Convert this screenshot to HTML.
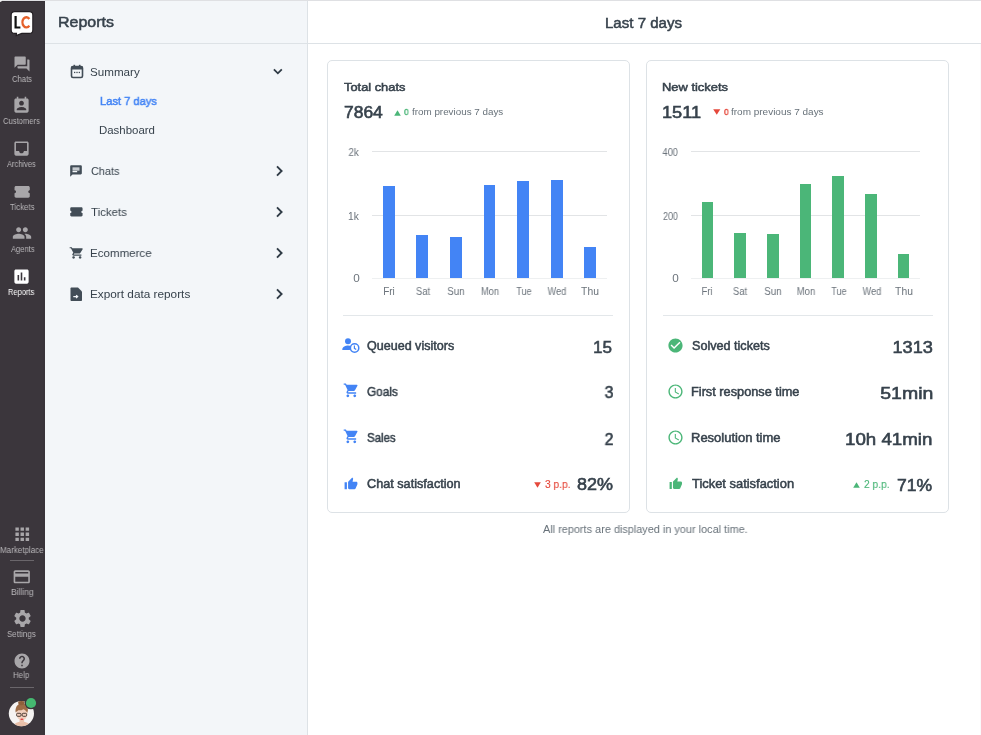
<!DOCTYPE html>
<html><head><meta charset="utf-8"><style>
html,body{margin:0;padding:0}
body{width:981px;height:735px;overflow:hidden;position:relative;background:#fff;font-family:"Liberation Sans",sans-serif}
.t{position:absolute;white-space:nowrap;line-height:1;will-change:transform}
.abs{position:absolute}
</style></head><body>
<div class="abs" style="left:0;top:0;width:981px;height:1px;background:#dfe0e3"></div>
<div class="abs" style="left:0;top:1px;width:45px;height:734px;background:#3b363c"></div>
<div class="abs" style="left:45px;top:1px;width:262px;height:734px;background:#f3f6f9"></div>
<div class="abs" style="left:307px;top:1px;width:1px;height:734px;background:#dde2e6"></div>
<div class="abs" style="left:45px;top:43px;width:936px;height:1px;background:#dde2e6"></div>
<div class="abs" style="left:980px;top:44px;width:1px;height:691px;background:#fafafb"></div>
<div class="abs" style="left:327px;top:60px;width:301px;height:451px;border:1px solid #dde2e6;border-radius:5px"></div>
<div class="abs" style="left:646px;top:60px;width:301px;height:451px;border:1px solid #dde2e6;border-radius:5px"></div>
<div class="abs" style="left:343px;top:315px;width:270px;height:1px;background:#e3e7ea"></div>
<div class="abs" style="left:663px;top:315px;width:270px;height:1px;background:#e3e7ea"></div>
<div class="abs" style="left:10px;top:560px;width:24px;height:1px;background:#6a666b"></div>
<div class="abs" style="left:10px;top:687px;width:24px;height:1px;background:#6a666b"></div>
<div class="abs" style="left:0;top:1px;width:45px;height:1px;background:#353036"></div>
<div class="abs" style="left:0;top:0;width:2px;height:2px;background:#f2f2f3;border-bottom-right-radius:2px"></div>
<div class="abs" style="left:43px;top:1px;width:2px;height:734px;background:#39343a"></div>
<svg style="position:absolute;left:0;top:0" width="45" height="40" viewBox="0 0 45 40"><path d="M14.6 11.6h14.8c1.9 0 3.4 1.5 3.4 3.4v15c0 1.9-1.5 3.4-3.4 3.4h-7.6l-5.6 2.2.3-2.2h-1.9c-1.900 0-3.4-1.500-3.4-3.4v-15c0-1.900 1.500-3.4 3.4-3.4z" fill="#fff" stroke="#231f23" stroke-width="1.1"/><path d="M15.6 16v11.5h4.8" stroke="#111" stroke-width="2.2" fill="none"/><path d="M29.3 19.0A3.85 5.1 0 1 0 29.3 25.6" stroke="#e5612b" stroke-width="2.4" fill="none"/></svg>
<svg style="position:absolute;left:13.0px;top:54.5px" width="18" height="18" viewBox="0 0 24 24" fill="#a8a6a9"><path d="M21 6h-2v9H6v2c0 .55.45 1 1 1h11l4 4V7c0-.55-.45-1-1-1zm-4 6V3c0-.55-.45-1-1-1H3c-.55 0-1 .45-1 1v14l4-4h10c.55 0 1-.45 1-1z"/></svg><svg style="position:absolute;left:12.2px;top:95.8px" width="19" height="19" viewBox="0 0 24 24" fill="#a8a6a9"><path d="M19 3h-1V1h-2v2H8V1H6v2H5c-1.11 0-2 .9-2 2v14c0 1.1.89 2 2 2h14c1.1 0 2-.9 2-2V5c0-1.1-.9-2-2-2zm-7 3c1.65 0 3 1.35 3 3s-1.35 3-3 3-3-1.35-3-3 1.35-3 3-3zm6 12H6v-1c0-2 4-3.1 6-3.1s6 1.1 6 3.1v1z"/></svg><svg style="position:absolute;left:12.0px;top:139.0px" width="19" height="19" viewBox="0 0 24 24" fill="#a8a6a9"><path d="M19 3H4.99c-1.11 0-1.98.89-1.98 2L3 19c0 1.1.88 2 1.99 2H19c1.1 0 2-.9 2-2V5c0-1.11-.9-2-2-2zm0 12h-4c0 1.66-1.35 3-3 3s-3-1.34-3-3H4.99V5H19v10z"/></svg><svg style="position:absolute;left:12.5px;top:182.5px" width="18.3" height="17.6" viewBox="0 0 24 24" preserveAspectRatio="none" fill="#a8a6a9"><path d="M22 10V6c0-1.11-.9-2-2-2H4c-1.1 0-1.99.89-1.99 2v4c1.1 0 1.99.9 1.99 2s-.89 2-2 2v4c0 1.1.9 2 2 2h16c1.1 0 2-.9 2-2v-4c-1.1 0-2-.9-2-2s.9-2 2-2z"/></svg><svg style="position:absolute;left:12.0px;top:223.2px" width="20" height="20" viewBox="0 0 24 24" fill="#a8a6a9"><path d="M16 11c1.66 0 2.99-1.34 2.99-3S17.66 5 16 5c-1.66 0-3 1.34-3 3s1.34 3 3 3zm-8 0c1.66 0 2.99-1.34 2.99-3S9.66 5 8 5C6.34 5 5 6.34 5 8s1.34 3 3 3zm0 2c-2.33 0-7 1.170-7 3.5V19h14v-2.5c0-2.33-4.67-3.5-7-3.5zm8 0c-.29 0-.62.02-.97.05 1.16.84 1.970 1.970 1.970 3.45V19h6v-2.5c0-2.33-4.67-3.5-7-3.5z"/></svg><svg style="position:absolute;left:12.0px;top:266.5px" width="19" height="19" viewBox="0 0 24 24" fill="#ffffff"><path d="M19 3H5c-1.1 0-2 .9-2 2v14c0 1.1.9 2 2 2h14c1.1 0 2-.9 2-2V5c0-1.1-.9-2-2-2zM9 17H7v-7h2v7zm4 0h-2V7h2v10zm4 0h-2v-4h2v4z"/></svg><svg style="position:absolute;left:11.5px;top:524.4px" width="20.5" height="20.5" viewBox="0 0 24 24" fill="#a8a6a9"><path d="M4 8h4V4H4v4zm6 12h4v-4h-4v4zm-6 0h4v-4H4v4zm0-6h4v-4H4v4zm6 0h4v-4h-4v4zm6-10v4h4V4h-4zm-6 4h4V4h-4v4zm6 6h4v-4h-4v4zm0 6h4v-4h-4v4z"/></svg><svg style="position:absolute;left:12.3px;top:567.2px" width="19.5" height="19.5" viewBox="0 0 24 24" fill="#a8a6a9"><path d="M20 4H4c-1.11 0-1.99.89-1.99 2L2 18c0 1.11.89 2 2 2h16c1.11 0 2-.89 2-2V6c0-1.11-.89-2-2-2zm0 14H4v-6h16v6zm0-10H4V6h16v2z"/></svg><svg style="position:absolute;left:11.5px;top:607.5px" width="21" height="21" viewBox="0 0 24 24" fill="#a8a6a9"><path d="M19.14 12.94c.04-.3.06-.61.06-.94 0-.32-.02-.64-.07-.94l2.03-1.58c.18-.14.23-.41.12-.61l-1.92-3.32c-.12-.22-.37-.29-.59-.22l-2.39.96c-.5-.38-1.030-.7-1.620-.94l-.36-2.54c-.04-.24-.24-.41-.48-.41h-3.84c-.24 0-.43.17-.47.41l-.36 2.54c-.59.24-1.130.57-1.620.94l-2.39-.96c-.22-.08-.47 0-.59.22L2.740 8.87c-.12.21-.08.47.12.61l2.030 1.58c-.05.3-.09.63-.09.94s.02.64.07.94l-2.030 1.58c-.18.14-.23.41-.12.61l1.920 3.32c.12.22.37.29.59.22l2.390-.96c.5.38 1.030.7 1.620.94l.36 2.54c.05.24.24.41.48.41h3.84c.24 0 .44-.17.47-.41l.36-2.54c.59-.24 1.130-.56 1.620-.94l2.390.96c.22.08.47 0 .59-.22l1.920-3.32c.12-.22.07-.47-.12-.61l-2.010-1.58zM12 15.6c-1.98 0-3.6-1.62-3.6-3.6s1.62-3.6 3.6-3.6 3.6 1.62 3.6 3.6-1.62 3.6-3.6 3.6z"/></svg><svg style="position:absolute;left:12.8px;top:651.8px" width="18" height="18" viewBox="0 0 24 24" fill="#a8a6a9"><path d="M12 2C6.48 2 2 6.48 2 12s4.48 10 10 10 10-4.48 10-10S17.52 2 12 2zm1 17h-2v-2h2v2zm2.07-7.75l-.9.92C13.45 12.9 13 13.5 13 15h-2v-.5c0-1.1.45-2.1 1.17-2.83l1.24-1.26c.37-.36.59-.86.59-1.41 0-1.1-.9-2-2-2s-2 .9-2 2H8c0-2.21 1.79-4 4-4s4 1.79 4 4c0 .88-.36 1.68-.93 2.25z"/></svg><svg style="position:absolute;left:69.0px;top:163.6px" width="14" height="14" viewBox="0 0 24 24" preserveAspectRatio="none" fill="#424d57"><path d="M20 2H4c-1.1 0-1.99.9-1.99 2L2 22l4-4h14c1.1 0 2-.9 2-2V4c0-1.1-.9-2-2-2zM6 9h12v2H6V9zm8 5H6v-2h8v2zm4-6H6V6h12v2z"/></svg><svg style="position:absolute;left:69.4px;top:204.7px" width="14.8" height="13.8" viewBox="0 0 24 24" preserveAspectRatio="none" fill="#424d57"><path d="M22 10V6c0-1.11-.9-2-2-2H4c-1.1 0-1.99.89-1.99 2v4c1.1 0 1.99.9 1.99 2s-.89 2-2 2v4c0 1.1.9 2 2 2h16c1.1 0 2-.9 2-2v-4c-1.1 0-2-.9-2-2s.9-2 2-2z"/></svg><svg style="position:absolute;left:69.15px;top:246.05px" width="15.7" height="13.8" viewBox="0 0 24 24" preserveAspectRatio="none" fill="#424d57"><path d="M7 18c-1.1 0-1.99.9-1.99 2S5.9 22 7 22s2-.9 2-2-.9-2-2-2zM1 2v2h2l3.6 7.59-1.35 2.45c-.16.28-.25.61-.25.96 0 1.1.9 2 2 2h12v-2H7.42c-.14 0-.25-.11-.25-.25l.03-.12.9-1.63h7.45c.75 0 1.41-.41 1.75-1.03l3.58-6.49c.08-.14.12-.31.12-.48 0-.55-.45-1-1-1H5.21l-.94-2H1zm16 16c-1.1 0-1.99.9-1.99 2s.89 2 1.99 2 2-.9 2-2-.9-2-2-2z"/></svg><svg style="position:absolute;left:342.5px;top:382.2px" width="16.6" height="16.6" viewBox="0 0 24 24" fill="#4384f5"><path d="M7 18c-1.1 0-1.99.9-1.99 2S5.9 22 7 22s2-.9 2-2-.9-2-2-2zM1 2v2h2l3.6 7.59-1.35 2.45c-.16.28-.25.61-.25.96 0 1.1.9 2 2 2h12v-2H7.42c-.14 0-.25-.11-.25-.25l.03-.12.9-1.63h7.45c.75 0 1.41-.41 1.75-1.03l3.58-6.49c.08-.14.12-.31.12-.48 0-.55-.45-1-1-1H5.21l-.94-2H1zm16 16c-1.1 0-1.99.9-1.99 2s.89 2 1.99 2 2-.9 2-2-.9-2-2-2z"/></svg><svg style="position:absolute;left:342.5px;top:428.2px" width="16.6" height="16.6" viewBox="0 0 24 24" fill="#4384f5"><path d="M7 18c-1.1 0-1.99.9-1.99 2S5.9 22 7 22s2-.9 2-2-.9-2-2-2zM1 2v2h2l3.6 7.59-1.35 2.45c-.16.28-.25.61-.25.96 0 1.1.9 2 2 2h12v-2H7.42c-.14 0-.25-.11-.25-.25l.03-.12.9-1.63h7.45c.75 0 1.41-.41 1.75-1.03l3.58-6.49c.08-.14.12-.31.12-.48 0-.55-.45-1-1-1H5.21l-.94-2H1zm16 16c-1.1 0-1.99.9-1.99 2s.89 2 1.99 2 2-.9 2-2-.9-2-2-2z"/></svg><svg style="position:absolute;left:344.1px;top:477.2px" width="14" height="14" viewBox="0 0 24 24" fill="#4384f5"><path d="M1 21h4V9H1v12zm22-11c0-1.1-.9-2-2-2h-6.31l.95-4.57.03-.32c0-.41-.17-.79-.44-1.06L14.17 1 7.59 7.59C7.22 7.95 7 8.45 7 9v10c0 1.1.9 2 2 2h9c.83 0 1.54-.5 1.84-1.22l3.02-7.05c.09-.23.14-.47.14-.73v-1.91l-.01-.01L23 10z"/></svg><svg style="position:absolute;left:667.0px;top:337.0px" width="17" height="17" viewBox="0 0 24 24" fill="#4bb678"><path d="M12 2C6.48 2 2 6.48 2 12s4.48 10 10 10 10-4.48 10-10S17.52 2 12 2zm-2 15l-5-5 1.41-1.41L10 14.17l7.59-7.59L19 8l-9 9z"/></svg><svg style="position:absolute;left:667.0px;top:383.0px" width="17" height="17" viewBox="0 0 24 24" fill="#4bb678"><path d="M11.99 2C6.47 2 2 6.48 2 12s4.47 10 9.99 10C17.52 22 22 17.52 22 12S17.52 2 11.99 2zM12 20c-4.42 0-8-3.580-8-8s3.580-8 8-8 8 3.580 8 8-3.580 8-8 8zm.5-13H11v6l5.25 3.15.75-1.23-4.5-2.67z"/></svg><svg style="position:absolute;left:667.0px;top:429.0px" width="17" height="17" viewBox="0 0 24 24" fill="#4bb678"><path d="M11.99 2C6.47 2 2 6.48 2 12s4.47 10 9.99 10C17.52 22 22 17.52 22 12S17.52 2 11.99 2zM12 20c-4.42 0-8-3.580-8-8s3.580-8 8-8 8 3.580 8 8-3.580 8-8 8zm.5-13H11v6l5.25 3.15.75-1.23-4.5-2.67z"/></svg><svg style="position:absolute;left:668.6px;top:477.3px" width="13.6" height="13.6" viewBox="0 0 24 24" fill="#4bb678"><path d="M1 21h4V9H1v12zm22-11c0-1.1-.9-2-2-2h-6.31l.95-4.57.03-.32c0-.41-.17-.79-.44-1.06L14.17 1 7.59 7.59C7.22 7.95 7 8.45 7 9v10c0 1.1.9 2 2 2h9c.83 0 1.54-.5 1.84-1.22l3.02-7.05c.09-.23.14-.47.14-.73v-1.91l-.01-.01L23 10z"/></svg>
<svg style="position:absolute;left:70px;top:64px" width="14" height="15" viewBox="0 0 14 15"><rect x="1.5" y="2.5" width="11" height="11" rx="1.5" fill="none" stroke="#424d57" stroke-width="1.6"/><rect x="1.5" y="2.5" width="11" height="3" fill="#424d57"/><rect x="3.5" y="0.8" width="1.6" height="3" fill="#424d57"/><rect x="8.9" y="0.8" width="1.6" height="3" fill="#424d57"/><rect x="4" y="7.8" width="1.3" height="1.3" fill="#424d57"/><rect x="6.35" y="7.8" width="1.3" height="1.3" fill="#424d57"/><rect x="8.7" y="7.8" width="1.3" height="1.3" fill="#424d57"/></svg><svg style="position:absolute;left:70px;top:287px" width="13" height="14" viewBox="0 0 13 14"><path d="M1.5 0.5h6.5l4 4v8.5c0 .55-.45 1-1 1h-9.5c-.55 0-1-.45-1-1v-11.5c0-.55.45-1 1-1z" fill="#424d57"/><path d="M3.3 9.6h4.2M6.1 8.1l1.6 1.5-1.6 1.5" stroke="#f3f6f9" stroke-width="1.2" fill="none"/></svg><svg style="position:absolute;left:341.7px;top:337.7px" width="18" height="15" viewBox="0 0 18 15"><circle cx="6" cy="3.2" r="3" fill="#4384f5"/><path d="M0.3 11.5c0-2.6 3.5-4 5.7-4 1.2 0 2.6.3 3.7.9-1.1.9-1.8 2.2-1.8 3.6H0.3z" fill="#4384f5"/><circle cx="12.6" cy="10" r="4.2" fill="#fff" stroke="#4384f5" stroke-width="1.5"/><path d="M12.4 7.6v2.7l1.8 1.1" stroke="#4384f5" stroke-width="1.2" fill="none"/></svg><svg style="position:absolute;left:271px;top:66px" width="13" height="11" viewBox="0 0 13 11"><path d="M2.9 3.4l3.95 3.95 3.95-3.95" stroke="#2f3b46" stroke-width="1.8" fill="none"/></svg><svg style="position:absolute;left:272px;top:163.7px" width="13" height="14" viewBox="0 0 13 14"><path d="M5 2.4l4.6 4.6-4.6 4.6" stroke="#2f3b46" stroke-width="1.9" fill="none"/></svg><svg style="position:absolute;left:272px;top:204.7px" width="13" height="14" viewBox="0 0 13 14"><path d="M5 2.4l4.6 4.6-4.6 4.6" stroke="#2f3b46" stroke-width="1.9" fill="none"/></svg><svg style="position:absolute;left:272px;top:245.7px" width="13" height="14" viewBox="0 0 13 14"><path d="M5 2.4l4.6 4.6-4.6 4.6" stroke="#2f3b46" stroke-width="1.9" fill="none"/></svg><svg style="position:absolute;left:272px;top:286.7px" width="13" height="14" viewBox="0 0 13 14"><path d="M5 2.4l4.6 4.6-4.6 4.6" stroke="#2f3b46" stroke-width="1.9" fill="none"/></svg>
<svg style="position:absolute;left:5px;top:693px" width="35" height="37" viewBox="0 0 35 37"><defs><clipPath id="av"><circle cx="16.4" cy="20.6" r="12.6"/></clipPath></defs><circle cx="16.4" cy="20.6" r="12.6" fill="#f5f3f2"/><g clip-path="url(#av)"><ellipse cx="16.8" cy="34" rx="8.5" ry="5.5" fill="#e9bfa8"/><rect x="14.5" y="24" width="4.6" height="6" fill="#ecc4ae"/><ellipse cx="16.9" cy="20.5" rx="5.6" ry="6.6" fill="#f1cfbd"/><path d="M10.6 19.5c-.6-4.5 1.5-8.8 6-9.200 4.200-.300 6.600 2.800 6.300 7.300l-.6 2.200c-1.200-1.800-2.300-3.200-4-3.600-1.300 1-3.200 1.300-5 1.100-1.200.9-2.100 1.800-2.700 2.200z" fill="#9d6c46"/><ellipse cx="16.4" cy="9.6" rx="3.2" ry="2.6" fill="#8f603b"/><rect x="11.6" y="20.3" width="4.4" height="3.0" rx="1" fill="none" stroke="#3d312b" stroke-width="0.9"/><rect x="17.2" y="20.3" width="4.4" height="3.0" rx="1" fill="none" stroke="#3d312b" stroke-width="0.9"/><ellipse cx="16.9" cy="26.3" rx="1.6" ry="0.8" fill="#e0393d"/></g><circle cx="26" cy="10" r="6.3" fill="#3b363c"/><circle cx="26" cy="10" r="5.1" fill="#45b870"/></svg>
<div style="position:absolute;left:372px;top:151px;width:235px;height:1px;background:#e2e4e6"></div><div style="position:absolute;left:372px;top:215px;width:235px;height:1px;background:#e2e4e6"></div><div style="position:absolute;left:372px;top:278px;width:235px;height:1px;background:#eef0f1"></div><div style="position:absolute;left:382.89px;top:186px;width:11.8px;height:92px;background:#4384f5"></div><div style="position:absolute;left:416.46px;top:235px;width:11.8px;height:43px;background:#4384f5"></div><div style="position:absolute;left:450.03px;top:237px;width:11.8px;height:41px;background:#4384f5"></div><div style="position:absolute;left:483.60px;top:185px;width:11.8px;height:93px;background:#4384f5"></div><div style="position:absolute;left:517.17px;top:181px;width:11.8px;height:97px;background:#4384f5"></div><div style="position:absolute;left:550.74px;top:180px;width:11.8px;height:98px;background:#4384f5"></div><div style="position:absolute;left:584.31px;top:247px;width:11.8px;height:31px;background:#4384f5"></div><div style="position:absolute;left:691px;top:151px;width:229px;height:1px;background:#e2e4e6"></div><div style="position:absolute;left:691px;top:215px;width:229px;height:1px;background:#e2e4e6"></div><div style="position:absolute;left:691px;top:278px;width:229px;height:1px;background:#eef0f1"></div><div style="position:absolute;left:701.61px;top:202px;width:11.5px;height:76px;background:#4bb678"></div><div style="position:absolute;left:734.32px;top:232.5px;width:11.5px;height:45.5px;background:#4bb678"></div><div style="position:absolute;left:767.04px;top:233.5px;width:11.5px;height:44.5px;background:#4bb678"></div><div style="position:absolute;left:799.75px;top:184px;width:11.5px;height:94px;background:#4bb678"></div><div style="position:absolute;left:832.46px;top:176px;width:11.5px;height:102px;background:#4bb678"></div><div style="position:absolute;left:865.18px;top:194px;width:11.5px;height:84px;background:#4bb678"></div><div style="position:absolute;left:897.89px;top:254px;width:11.5px;height:24px;background:#4bb678"></div>
<svg style="position:absolute;left:393.5px;top:109.5px" width="7" height="6" viewBox="0 0 7 6"><path d="M3.5 0.3L6.8 5.8H0.2z" fill="#4bb678"/></svg><svg style="position:absolute;left:713px;top:108.7px" width="7.5" height="6" viewBox="0 0 7.5 6"><path d="M0.2 0.2H7.3L3.75 5.8z" fill="#e5483b"/></svg><svg style="position:absolute;left:533.7px;top:482px" width="7" height="6" viewBox="0 0 7 6"><path d="M0.2 0.2H6.8L3.5 5.8z" fill="#e5483b"/></svg><svg style="position:absolute;left:853.3px;top:482.2px" width="7" height="6" viewBox="0 0 7 6"><path d="M3.5 0.2L6.8 5.8H0.2z" fill="#4bb678"/></svg>
<div id="t_reports" class="t" style="top:15.01px;font-size:14.9px;color:#37424c;-webkit-text-stroke:0.5px #37424c;left:58.20px;transform:scaleX(1.0720);transform-origin:left top;">Reports</div>
<div id="t_summary" class="t" style="top:65.81px;font-size:11.6px;color:#37424c;left:89.80px;transform:scaleX(1.0038);transform-origin:left top;">Summary</div>
<div id="t_l7" class="t" style="top:96.00px;font-size:11.2px;color:#4384f5;-webkit-text-stroke:0.5px #4384f5;left:99.80px;transform:scaleX(0.9946);transform-origin:left top;">Last 7 days</div>
<div id="t_dash" class="t" style="top:124.90px;font-size:11.4px;color:#37424c;left:98.80px;transform:scaleX(1.0031);transform-origin:left top;">Dashboard</div>
<div id="t_nchats" class="t" style="top:165.00px;font-size:11.6px;color:#37424c;left:91.00px;transform:scaleX(0.9413);transform-origin:left top;">Chats</div>
<div id="t_ntick" class="t" style="top:205.81px;font-size:11.6px;color:#37424c;left:91.00px;transform:scaleX(0.9881);transform-origin:left top;">Tickets</div>
<div id="t_necom" class="t" style="top:247.00px;font-size:11.6px;color:#37424c;left:90.00px;transform:scaleX(0.9949);transform-origin:left top;">Ecommerce</div>
<div id="t_nexp" class="t" style="top:287.90px;font-size:11.6px;color:#37424c;left:90.00px;transform:scaleX(1.0170);transform-origin:left top;">Export data reports</div>
<div id="t_head" class="t" style="top:15.81px;font-size:14.7px;color:#37424c;-webkit-text-stroke:0.5px #37424c;left:605.40px;transform:scaleX(1.0246);transform-origin:left top;">Last 7 days</div>
<div id="t_tc" class="t" style="top:82.10px;font-size:11.4px;color:#37424c;-webkit-text-stroke:0.5px #37424c;left:344.20px;transform:scaleX(1.1274);transform-origin:left top;">Total chats</div>
<div id="t_7864" class="t" style="top:105.00px;font-size:16.8px;color:#37424c;-webkit-text-stroke:0.6px #37424c;left:344.20px;transform:scaleX(1.0388);transform-origin:left top;">7864</div>
<div id="t_c1z" class="t" style="top:107.01px;font-size:9.5px;color:#4bb678;-webkit-text-stroke:0.4px #4bb678;left:404.20px;transform:scaleX(0.8788);transform-origin:left top;">0</div>
<div id="t_c1f" class="t" style="top:107.01px;font-size:9.5px;color:#677179;left:411.80px;transform:scaleX(1.0348);transform-origin:left top;">from previous 7 days</div>
<div id="t_qv" class="t" style="top:340.01px;font-size:12.3px;color:#37424c;-webkit-text-stroke:0.5px #37424c;left:366.80px;transform:scaleX(1.0201);transform-origin:left top;">Queued visitors</div>
<div id="t_goals" class="t" style="top:386.01px;font-size:12.3px;color:#37424c;-webkit-text-stroke:0.5px #37424c;left:366.80px;transform:scaleX(0.9572);transform-origin:left top;">Goals</div>
<div id="t_sales" class="t" style="top:432.10px;font-size:12.3px;color:#37424c;-webkit-text-stroke:0.5px #37424c;left:366.80px;transform:scaleX(0.9335);transform-origin:left top;">Sales</div>
<div id="t_cs" class="t" style="top:477.90px;font-size:12.3px;color:#37424c;-webkit-text-stroke:0.5px #37424c;left:366.80px;transform:scaleX(1.0303);transform-origin:left top;">Chat satisfaction</div>
<div id="t_15" class="t" style="top:338.50px;font-size:17.0px;color:#37424c;-webkit-text-stroke:0.6px #37424c;right:369.00px;transform:scaleX(0.9989);transform-origin:right top;">15</div>
<div id="t_3" class="t" style="top:384.41px;font-size:17.0px;color:#37424c;-webkit-text-stroke:0.6px #37424c;right:368.00px;transform:scaleX(0.9320);transform-origin:right top;">3</div>
<div id="t_2" class="t" style="top:430.71px;font-size:17.0px;color:#37424c;-webkit-text-stroke:0.6px #37424c;right:368.00px;transform:scaleX(0.9319);transform-origin:right top;">2</div>
<div id="t_82" class="t" style="top:476.00px;font-size:17.0px;color:#37424c;-webkit-text-stroke:0.6px #37424c;right:368.00px;transform:scaleX(1.0565);transform-origin:right top;">82%</div>
<div id="t_3pp" class="t" style="top:479.81px;font-size:10.3px;color:#e5483b;-webkit-text-stroke:0.12px #e5483b;left:544.60px;transform:scaleX(0.9866);transform-origin:left top;">3 p.p.</div>
<div id="t_nt" class="t" style="top:82.10px;font-size:11.4px;color:#37424c;-webkit-text-stroke:0.5px #37424c;left:662.20px;transform:scaleX(1.1333);transform-origin:left top;">New tickets</div>
<div id="t_1511" class="t" style="top:105.00px;font-size:16.8px;color:#37424c;-webkit-text-stroke:0.6px #37424c;left:662.20px;transform:scaleX(1.0843);transform-origin:left top;">1511</div>
<div id="t_c2z" class="t" style="top:107.01px;font-size:9.5px;color:#e5483b;-webkit-text-stroke:0.4px #e5483b;left:723.60px;transform:scaleX(0.8888);transform-origin:left top;">0</div>
<div id="t_c2f" class="t" style="top:107.01px;font-size:9.5px;color:#677179;left:731.40px;transform:scaleX(1.0502);transform-origin:left top;">from previous 7 days</div>
<div id="t_st" class="t" style="top:339.90px;font-size:12.3px;color:#37424c;-webkit-text-stroke:0.5px #37424c;left:692.40px;transform:scaleX(1.0251);transform-origin:left top;">Solved tickets</div>
<div id="t_frt" class="t" style="top:386.01px;font-size:12.3px;color:#37424c;-webkit-text-stroke:0.5px #37424c;left:691.40px;transform:scaleX(1.0374);transform-origin:left top;">First response time</div>
<div id="t_rt" class="t" style="top:432.21px;font-size:12.3px;color:#37424c;-webkit-text-stroke:0.5px #37424c;left:691.40px;transform:scaleX(1.0566);transform-origin:left top;">Resolution time</div>
<div id="t_ts" class="t" style="top:477.71px;font-size:12.3px;color:#37424c;-webkit-text-stroke:0.5px #37424c;left:692.40px;transform:scaleX(1.0492);transform-origin:left top;">Ticket satisfaction</div>
<div id="t_1313" class="t" style="top:338.91px;font-size:17.0px;color:#37424c;-webkit-text-stroke:0.6px #37424c;right:48.40px;transform:scaleX(1.0672);transform-origin:right top;">1313</div>
<div id="t_51" class="t" style="top:384.80px;font-size:17.0px;color:#37424c;-webkit-text-stroke:0.6px #37424c;right:47.40px;transform:scaleX(1.1454);transform-origin:right top;">51min</div>
<div id="t_10h" class="t" style="top:430.50px;font-size:17.0px;color:#37424c;-webkit-text-stroke:0.6px #37424c;right:48.40px;transform:scaleX(1.1001);transform-origin:right top;">10h 41min</div>
<div id="t_71" class="t" style="top:476.71px;font-size:17.0px;color:#37424c;-webkit-text-stroke:0.6px #37424c;right:49.40px;transform:scaleX(1.0326);transform-origin:right top;">71%</div>
<div id="t_2pp" class="t" style="top:479.81px;font-size:10.3px;color:#4bb678;-webkit-text-stroke:0.12px #4bb678;left:864.20px;transform:scaleX(0.9889);transform-origin:left top;">2 p.p.</div>
<div id="t_foot" class="t" style="top:523.50px;font-size:11.1px;color:#677179;left:543.20px;transform:scaleX(0.9822);transform-origin:left top;">All reports are displayed in your local time.</div>
<div id="ay1_2k" class="t" style="top:147.91px;font-size:10.2px;color:#6b737b;right:622.00px;transform:scaleX(0.9591);transform-origin:right top;">2k</div>
<div id="ay1_1k" class="t" style="top:211.61px;font-size:10.2px;color:#6b737b;right:622.00px;transform:scaleX(1.0046);transform-origin:right top;">1k</div>
<div id="ay1_0" class="t" style="top:274.30px;font-size:10.2px;color:#6b737b;right:621.00px;transform:scaleX(1.1527);transform-origin:right top;">0</div>
<div id="ay2_400" class="t" style="top:147.91px;font-size:10.2px;color:#6b737b;right:303.00px;transform:scaleX(0.9126);transform-origin:right top;">400</div>
<div id="ay2_200" class="t" style="top:211.61px;font-size:10.2px;color:#6b737b;right:303.00px;transform:scaleX(0.8828);transform-origin:right top;">200</div>
<div id="ay2_0" class="t" style="top:274.30px;font-size:10.2px;color:#6b737b;right:302.00px;transform:scaleX(1.1527);transform-origin:right top;">0</div>
<div id="ax1_Fri" class="t" style="top:286.71px;font-size:10.0px;color:#6b737b;left:289.00px;width:200px;text-align:center;">Fri</div>
<div id="ax1_Sat" class="t" style="top:286.71px;font-size:10.0px;color:#6b737b;left:322.50px;width:200px;text-align:center;transform:scaleX(0.9343);transform-origin:center top;">Sat</div>
<div id="ax1_Sun" class="t" style="top:286.71px;font-size:10.0px;color:#6b737b;left:355.50px;width:200px;text-align:center;transform:scaleX(0.9706);transform-origin:center top;">Sun</div>
<div id="ax1_Mon" class="t" style="top:286.71px;font-size:10.0px;color:#6b737b;left:389.50px;width:200px;text-align:center;transform:scaleX(0.9220);transform-origin:center top;">Mon</div>
<div id="ax1_Tue" class="t" style="top:286.71px;font-size:10.0px;color:#6b737b;left:423.50px;width:200px;text-align:center;transform:scaleX(0.9112);transform-origin:center top;">Tue</div>
<div id="ax1_Wed" class="t" style="top:286.71px;font-size:10.0px;color:#6b737b;left:457.00px;width:200px;text-align:center;transform:scaleX(0.9259);transform-origin:center top;">Wed</div>
<div id="ax1_Thu" class="t" style="top:286.71px;font-size:10.0px;color:#6b737b;left:489.50px;width:200px;text-align:center;transform:scaleX(1.0336);transform-origin:center top;">Thu</div>
<div id="ax2_Fri" class="t" style="top:286.71px;font-size:10.0px;color:#6b737b;left:607.30px;width:200px;text-align:center;transform:scaleX(0.9545);transform-origin:center top;">Fri</div>
<div id="ax2_Sat" class="t" style="top:286.71px;font-size:10.0px;color:#6b737b;left:639.50px;width:200px;text-align:center;transform:scaleX(0.9343);transform-origin:center top;">Sat</div>
<div id="ax2_Sun" class="t" style="top:286.71px;font-size:10.0px;color:#6b737b;left:672.70px;width:200px;text-align:center;transform:scaleX(0.9706);transform-origin:center top;">Sun</div>
<div id="ax2_Mon" class="t" style="top:286.71px;font-size:10.0px;color:#6b737b;left:705.90px;width:200px;text-align:center;transform:scaleX(0.9492);transform-origin:center top;">Mon</div>
<div id="ax2_Tue" class="t" style="top:286.71px;font-size:10.0px;color:#6b737b;left:739.10px;width:200px;text-align:center;transform:scaleX(0.9118);transform-origin:center top;">Tue</div>
<div id="ax2_Wed" class="t" style="top:286.71px;font-size:10.0px;color:#6b737b;left:771.80px;width:200px;text-align:center;transform:scaleX(0.9259);transform-origin:center top;">Wed</div>
<div id="ax2_Thu" class="t" style="top:286.71px;font-size:10.0px;color:#6b737b;left:803.50px;width:200px;text-align:center;transform:scaleX(1.0336);transform-origin:center top;">Thu</div>
<div id="sb_Chats" class="t" style="top:74.60px;font-size:8.8px;color:#b9b7ba;left:12.00px;transform:scaleX(0.8684);transform-origin:left top;">Chats</div>
<div id="sb_Customers" class="t" style="top:117.00px;font-size:8.8px;color:#b9b7ba;left:3.20px;transform:scaleX(0.8662);transform-origin:left top;">Customers</div>
<div id="sb_Archives" class="t" style="top:160.00px;font-size:8.8px;color:#b9b7ba;left:7.40px;transform:scaleX(0.8529);transform-origin:left top;">Archives</div>
<div id="sb_Tickets" class="t" style="top:202.50px;font-size:8.8px;color:#b9b7ba;left:10.00px;transform:scaleX(0.8890);transform-origin:left top;">Tickets</div>
<div id="sb_Agents" class="t" style="top:244.50px;font-size:8.8px;color:#b9b7ba;left:10.60px;transform:scaleX(0.8618);transform-origin:left top;">Agents</div>
<div id="sb_Reports" class="t" style="top:287.50px;font-size:8.8px;color:#ffffff;left:8.40px;transform:scaleX(0.8517);transform-origin:left top;">Reports</div>
<div id="sb_Marketplace" class="t" style="top:545.80px;font-size:8.8px;color:#b9b7ba;left:-0.40px;transform:scaleX(0.9118);transform-origin:left top;">Marketplace</div>
<div id="sb_Billing" class="t" style="top:588.00px;font-size:8.8px;color:#b9b7ba;left:11.20px;transform:scaleX(0.9662);transform-origin:left top;">Billing</div>
<div id="sb_Settings" class="t" style="top:629.50px;font-size:8.8px;color:#b9b7ba;left:7.40px;transform:scaleX(0.9028);transform-origin:left top;">Settings</div>
<div id="sb_Help" class="t" style="top:671.00px;font-size:8.8px;color:#b9b7ba;left:13.20px;transform:scaleX(0.8970);transform-origin:left top;">Help</div>
</body></html>
